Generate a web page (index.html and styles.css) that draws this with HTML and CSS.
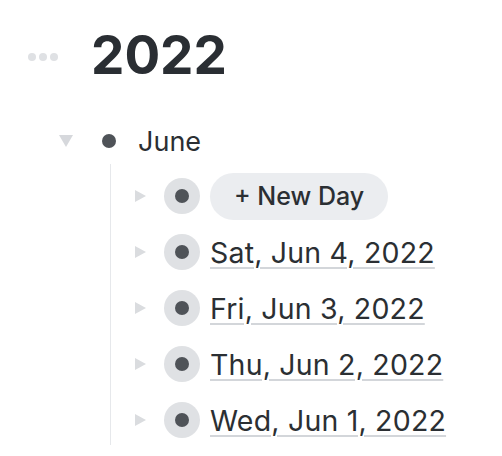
FILE: index.html
```html
<!DOCTYPE html>
<html lang="en">
<head>
    <meta charset="UTF-8">
    <meta name="viewport" content="width=device-width, initial-scale=1.0">
    <title>2022</title>
    <link rel="stylesheet" href="styles.css">
</head>
<body>
    <div class="page">
        <div class="page-header">
            <div class="more-dots">
                <span></span><span></span><span></span>
            </div>
            <h1 class="page-title">2022</h1>
        </div>

        <div class="block">
            <div class="block-row month-row">
                <span class="toggle toggle-open"></span>
                <span class="bullet"><span class="dot"></span></span>
                <span class="block-text">June</span>
            </div>

            <div class="children">
                <div class="block-row">
                    <span class="toggle toggle-closed"></span>
                    <span class="bullet collapsed"><span class="dot"></span></span>
                    <button class="new-day">+ New Day</button>
                </div>
                <div class="block-row">
                    <span class="toggle toggle-closed"></span>
                    <span class="bullet collapsed"><span class="dot"></span></span>
                    <a class="page-ref" href="#">Sat, Jun 4, 2022</a>
                </div>
                <div class="block-row">
                    <span class="toggle toggle-closed"></span>
                    <span class="bullet collapsed"><span class="dot"></span></span>
                    <a class="page-ref" href="#">Fri, Jun 3, 2022</a>
                </div>
                <div class="block-row">
                    <span class="toggle toggle-closed"></span>
                    <span class="bullet collapsed"><span class="dot"></span></span>
                    <a class="page-ref" href="#">Thu, Jun 2, 2022</a>
                </div>
                <div class="block-row">
                    <span class="toggle toggle-closed"></span>
                    <span class="bullet collapsed"><span class="dot"></span></span>
                    <a class="page-ref" href="#">Wed, Jun 1, 2022</a>
                </div>
            </div>
        </div>
    </div>
</body>
</html>
```

FILE: styles.css
```css
/* General styling */
body {
    margin: 0;
    background-color: #ffffff;
    font-family: Inter, 'Noto Sans', sans-serif;
    color: #2b2f33;
}

.page {
    padding: 22px 0 0 0;
}

/* Title */
.page-header {
    display: flex;
    align-items: center;
    padding-left: 28px;
}

.more-dots {
    display: flex;
    gap: 3px;
    width: 63px;
    margin-top: 4px;
}

.more-dots span {
    width: 8px;
    height: 8px;
    border-radius: 50%;
    background-color: #dfe1e4;
}

.page-title {
    margin: 0;
    font-size: 53px;
    font-weight: 700;
    line-height: 66px;
    color: #2a2e33;
}

/* Blocks */
.block {
    margin-top: 30px;
    padding-left: 52px;
}

.block-row {
    display: flex;
    align-items: center;
    height: 50px;
}

.month-row {
    height: 46px;
}

.toggle {
    width: 28px;
    display: flex;
    justify-content: center;
    align-items: center;
}

.toggle-open::before {
    content: "";
    border-left: 7px solid transparent;
    border-right: 7px solid transparent;
    border-top: 12px solid #d6d8dc;
}

.toggle-closed::before {
    content: "";
    border-top: 6px solid transparent;
    border-bottom: 6px solid transparent;
    border-left: 11px solid #dadcdf;
    margin-left: 2px;
}

.bullet {
    width: 36px;
    height: 36px;
    margin-left: 11px;
    border-radius: 50%;
    display: flex;
    justify-content: center;
    align-items: center;
}

.bullet.collapsed {
    background-color: #dfe1e4;
}

.dot {
    width: 14px;
    height: 14px;
    border-radius: 50%;
    background-color: #4f5358;
}

.block-text {
    margin-left: 11px;
    font-size: 27px;
}

/* Children */
.children {
    margin-left: 58px;
    border-left: 1px solid #e6e8eb;
    padding: 7px 0 0 14px;
    display: flex;
    flex-direction: column;
    gap: 6px;
}

.page-ref {
    margin-left: 10px;
    font-size: 28.5px;
    letter-spacing: 0.2px;
    color: #2b2f33;
    text-decoration: underline;
    text-decoration-color: #d3d6da;
    text-decoration-thickness: 2px;
    text-underline-offset: 4px;
}

.new-day {
    margin-left: 10px;
    height: 47px;
    padding: 0 24px;
    border: none;
    border-radius: 24px;
    background-color: #ebedf0;
    font-family: Inter, 'Noto Sans', sans-serif;
    font-size: 25px;
    font-weight: 500;
    color: #2b2f33;
}
```
